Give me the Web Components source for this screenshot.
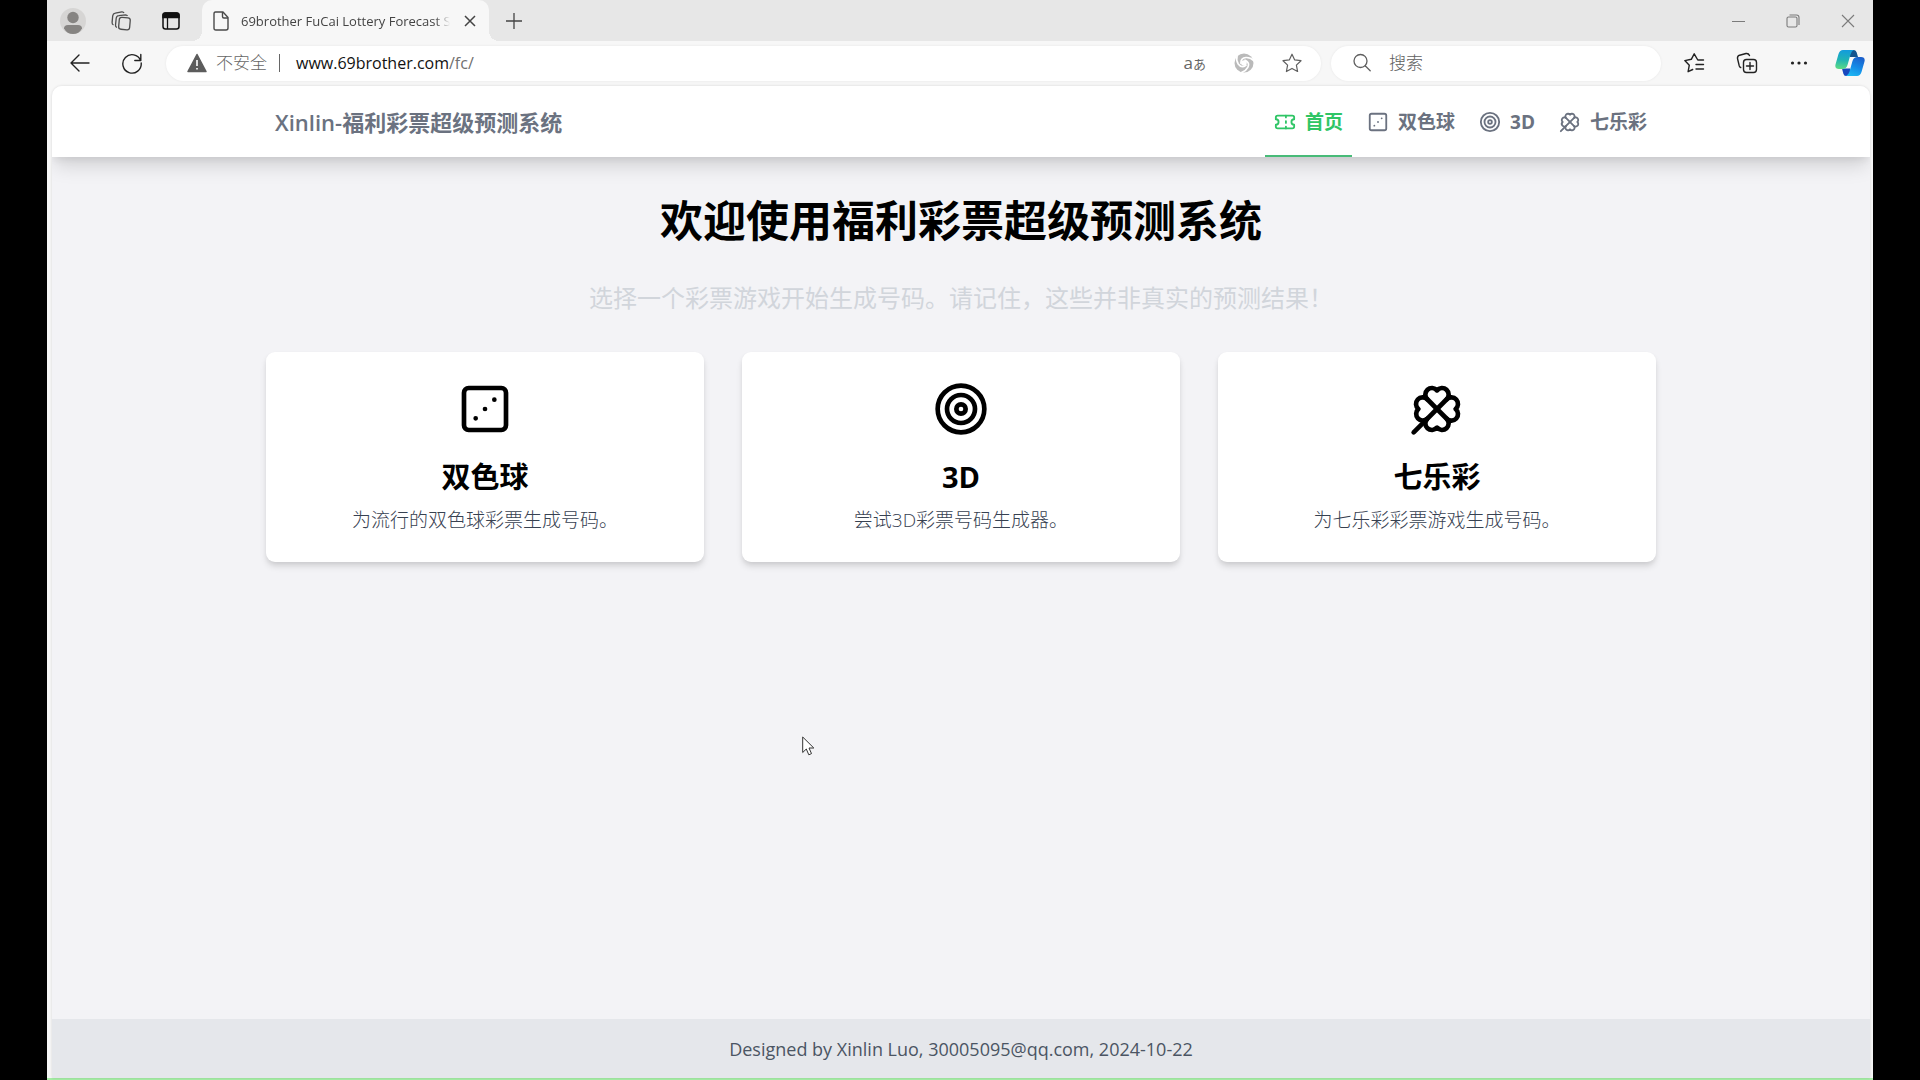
<!DOCTYPE html>
<html lang="zh-CN">
<head>
<meta charset="utf-8">
<title>69brother FuCai Lottery Forecast System</title>
<style>
html,body{margin:0;height:100%;background:#000}
body{font-family:"Open Sans","Noto Sans CJK SC",sans-serif;display:flex;overflow:hidden}
browser-window{margin:0 47px}
</style>
</head>
<body>
<browser-window>
  <lottery-page></lottery-page>
</browser-window>
<mouse-pointer></mouse-pointer>
<script>
const define = (name, html, setup) => customElements.define(name, class extends HTMLElement {
  constructor() {
    super();
    this.attachShadow({mode: 'open'}).innerHTML = '<style>*{box-sizing:border-box}a{color:inherit;text-decoration:none}svg{display:block}</style>' + html;
  }
  connectedCallback() { if (setup) setup(this, this.shadowRoot); }
});

const stroke = (body, w = 2) => `<svg viewBox="0 0 24 24" fill="none" stroke="currentColor" stroke-width="${w}" stroke-linecap="round" stroke-linejoin="round">${body}</svg>`;
const icons = {
  ticket: stroke('<path d="M2 9a3 3 0 0 1 0 6v2a2 2 0 0 0 2 2h16a2 2 0 0 0 2-2v-2a3 3 0 0 1 0-6V7a2 2 0 0 0-2-2H4a2 2 0 0 0-2 2Z"/><path d="M13 5v2M13 17v2M13 11v2"/>'),
  dice: stroke('<rect x="3" y="3" width="18" height="18" rx="2"/><path d="M16 8h.01M12 12h.01M8 16h.01"/>'),
  target: stroke('<circle cx="12" cy="12" r="10"/><circle cx="12" cy="12" r="6"/><circle cx="12" cy="12" r="2"/>'),
  clover: stroke('<path d="M16.17 7.83 2 22"/><path d="M4.02 12a2.827 2.827 0 1 1 3.81-4.17A2.827 2.827 0 1 1 12 4.02a2.827 2.827 0 1 1 4.17 3.81A2.827 2.827 0 1 1 19.98 12a2.827 2.827 0 1 1-3.81 4.17A2.827 2.827 0 1 1 12 19.98a2.827 2.827 0 1 1-4.17-3.81A1 1 0 1 1 4 12"/><path d="m7.83 7.83 8.34 8.34"/>'),
  profile: '<svg viewBox="0 0 26 26"><circle cx="13" cy="13" r="13" fill="#d6d5d4"/><circle cx="13" cy="9.500" r="5.700" fill="#868482"/><path d="M4 20.500q0-3.500 4-3.500h10q4 0 4 3.500-3 5.500-9 5.500t-9-5.500z" fill="#868482"/></svg>',
  workspaces: '<svg viewBox="0 0 22 22" fill="none" stroke="#4d4d4d" stroke-width="1.300" stroke-linejoin="round"><rect x="9" y="7.500" width="11" height="12" rx="2.500" transform="rotate(5 14 13)"/><path d="M7 17.500q-1.600-.5-1.500-2.200l.7-7q.3-2.500 2.700-2.700l6.600-.8q1.500 0 2 1.300"/><path d="M3.500 15q-1.600-.8-1.400-2.600l.6-6.500q.3-2.300 2.600-2.700l6.500-1.300q1.600-.2 2.200 1.200"/></svg>',
  tabs: '<svg viewBox="0 0 18 18" fill="none" stroke="#111" stroke-width="1.500"><rect x="1" y="1" width="16" height="16" rx="2.500"/><path d="M1 3.500q0-2.500 2.500-2.500h11q2.500 0 2.500 2.500V5.500H1z" fill="#111"/><path d="M5.500 5v12" stroke-width="1.300"/></svg>',
  page: '<svg viewBox="0 0 20 20" fill="none" stroke="#4a4a4a" stroke-width="1.400" stroke-linejoin="round"><path d="M4.500 1h7.500l5 5.500V17q0 2-2 2H5q-2 0-2-2V3q0-2 1.500-2z"/><path d="M11.500 1v4.500q0 1.500 1.500 1.500h4"/></svg>',
  close: '<svg viewBox="0 0 20 20" fill="none" stroke="currentColor" stroke-width="1.500"><path d="m5 5 10 10M15 5 5 15"/></svg>',
  plus: '<svg viewBox="0 0 20 20" fill="none" stroke="#444" stroke-width="1.300"><path d="M10 2v16M2 10h16"/></svg>',
  minimize: '<svg viewBox="0 0 20 20" fill="none" stroke="#7b7b7b"><path d="M4 10.500h13"/></svg>',
  restore: '<svg viewBox="0 0 20 20" fill="none" stroke="#7b7b7b" stroke-width="1.100"><rect x="4" y="6" width="10" height="10" rx="1.500"/><path d="M6.500 4h7q2.500 0 2.500 2.500V14"/></svg>',
  quit: '<svg viewBox="0 0 20 20" fill="none" stroke="#7b7b7b" stroke-width="1.100"><path d="m4 4 12 12M16 4 4 16"/></svg>',
  back: '<svg viewBox="0 0 22 22" fill="none" stroke="#222" stroke-width="1.400" stroke-linecap="round" stroke-linejoin="round"><path d="M20 11H2M10 3l-8 8 8 8"/></svg>',
  reload: '<svg viewBox="0 0 22 22" fill="none" stroke="#222" stroke-width="1.400" stroke-linecap="round" stroke-linejoin="round"><path d="M19.600 8.500a9.200 9.200 0 1 0 .6 2.500M19.800 2.500v6h-6"/></svg>',
  warn: '<svg viewBox="0 0 20 20"><path d="M10 1.500 19 18.500H1z" fill="#5c5c5c" stroke="#5c5c5c" stroke-width="1.500" stroke-linejoin="round"/><path d="M10 7v6M10 15v1.600" stroke="#fff" stroke-width="1.600"/></svg>',
  swirl: '<svg viewBox="0 0 20 20"><circle cx="10" cy="10" r="9.500" fill="#bababa"/><g fill="none" stroke="#fff" stroke-width="1.700" stroke-linecap="round"><path d="M7 10.500Q6.500 5 12 4.500q4.500-.2 7.500 3"/><path d="M7 10.500Q6.500 5 12 4.500q4.500-.2 7.500 3" transform="rotate(120 10 10)"/><path d="M7 10.500Q6.500 5 12 4.500q4.500-.2 7.500 3" transform="rotate(240 10 10)"/></g><circle cx="10" cy="10" r="2.800" fill="#fff"/></svg>',
  star: '<svg viewBox="0 0 20 20" fill="none" stroke="#5f5f5f" stroke-width="1.200" stroke-linejoin="round"><path d="m10 1.200 2.700 5.700 6.300.8-4.600 4.400 1.200 6.400L10 15.400l-5.600 3.100 1.200-6.400L1 7.700l6.300-.8z"/></svg>',
  search: '<svg viewBox="0 0 20 20" fill="none" stroke="#5f5f5f" stroke-width="1.300" stroke-linecap="round"><circle cx="8.500" cy="8" r="6.500"/><path d="m13.200 12.800 5 5"/></svg>',
  favorites: '<svg viewBox="0 0 22 22" fill="none" stroke="#222" stroke-width="1.400" stroke-linecap="round" stroke-linejoin="round"><path d="M20.500 8h-5.700L11.200 1.800 8.300 7.300 1.800 8.600l4.500 4.600-1.200 6.500 4.600-2.200M13 12.500h7.500M13 17h7.500"/></svg>',
  collections: '<svg viewBox="0 0 22 22" fill="none" stroke="#222" stroke-width="1.400" stroke-linecap="round" stroke-linejoin="round"><rect x="7.500" y="7.500" width="13" height="13" rx="3"/><path d="M14 10.500v7M10.500 14h7M4.700 15.500q-1-.3-1.500-1.800L1.500 6.500Q1.200 4 3.600 3.200L10 1.500q2.500-.4 3.500 2"/></svg>',
  more: '<svg viewBox="0 0 20 20" fill="#222"><circle cx="3.500" cy="10" r="1.600"/><circle cx="10" cy="10" r="1.600"/><circle cx="16.500" cy="10" r="1.600"/></svg>',
  copilot: '<svg viewBox="0 0 30 28"><defs><linearGradient id="l" x1=".3" y1="0" x2=".2" y2="1"><stop offset="0" stop-color="#139cdc"/><stop offset=".5" stop-color="#20b3b5"/><stop offset="1" stop-color="#5edc83"/></linearGradient><linearGradient id="r" x1=".7" y1="0" x2=".3" y2="1"><stop offset="0" stop-color="#1c60cb"/><stop offset=".5" stop-color="#1489e6"/><stop offset="1" stop-color="#1cb6f2"/></linearGradient></defs><path d="M15 1h4q2 0 2.700 2.500L23 8h-8z" fill="#14558f"/><path d="M15 27h-4q-2 0-2.700-2.500L7 19.500h8z" fill="#1747bd"/><path d="M8 1h11q-2.500.8-3.500 4.500L12.500 16q-1.200 4-5 4H4q-4.500 0-3.500-4.500L3.500 5Q4.800 1 8 1z" fill="url(#l)"/><path d="M22 27H11q2.500-.8 3.500-4.500L17.500 12q1.200-4 5-4H26q4.500 0 3.500 4.500L26.500 23Q25.200 27 22 27z" fill="url(#r)"/></svg>'
};

define('ui-icon', '<style>:host{display:block;flex:none;width:var(--size,20px)}</style><span></span>',
  (el, root) => { root.querySelector('span').innerHTML = icons[el.getAttribute('name')]; });

define('icon-button', `<style>
:host{display:block;flex:none}
button{display:flex;align-items:center;justify-content:center;padding:0;border:0;background:none;color:inherit;font:inherit;width:100%}
</style><button type="button"><ui-icon></ui-icon></button>`,
  (el, root) => {
    root.querySelector('button').setAttribute('aria-label', el.getAttribute('label'));
    root.querySelector('ui-icon').replaceWith(Object.assign(document.createElement('template'), {innerHTML: `<ui-icon name="${el.getAttribute('name')}"></ui-icon>`}).content);
  });

define('tab-strip', `<style>
:host{display:flex;height:41px;background:#e7e7e7;color:#444;align-items:center}
.left{display:flex;align-items:center;gap:24px;padding:0 22px 0 13px}
.tab{align-self:stretch;display:flex;align-items:center;gap:10px;width:287px;padding:0 9px 0 9px;background:#f7f7f7;border-radius:10px 10px 0 0;position:relative}
.tab::before,.tab::after{content:"";position:absolute;bottom:0;width:10px;height:10px}
.tab::before{right:100%;background:radial-gradient(circle at 0 0,transparent 10px,#f7f7f7 10px)}
.tab::after{left:100%;background:radial-gradient(circle at 100% 0,transparent 10px,#f7f7f7 10px)}
.title{flex:1;min-width:0;font:13px/20px "Open Sans","Noto Sans CJK SC",sans-serif;white-space:nowrap;overflow:hidden;-webkit-mask-image:linear-gradient(90deg,#000 93%,transparent)}
.new{margin-left:15px}
.win{display:flex;gap:35px;margin-left:auto;padding-right:15px}
</style>
<div class="left"><icon-button name="profile" label="个人资料" style="--size:26px"></icon-button><icon-button name="workspaces" label="工作区" style="--size:22px"></icon-button><icon-button name="tabs" label="标签页" style="--size:18px;margin-left:6px"></icon-button></div>
<div class="tab"><ui-icon name="page"></ui-icon><span class="title">69brother FuCai Lottery Forecast S</span><icon-button name="close" label="关闭标签页"></icon-button></div>
<icon-button class="new" name="plus" label="新建标签页"></icon-button>
<div class="win"><icon-button name="minimize" label="最小化"></icon-button><icon-button name="restore" label="还原"></icon-button><icon-button name="quit" label="关闭"></icon-button></div>`);

define('address-bar', `<style>
:host{display:flex;align-items:center;height:44px;margin-bottom:1px;padding:0 8px 0 22px;background:#f7f7f7;font-size:17px;line-height:24px;color:#666}
.pill{display:flex;align-items:center;height:35px;background:#fff;border-radius:18px;box-shadow:0 0 3px #0001}
.url{flex:1;margin-left:23px;padding:0 19px 0 21px}
.url label{margin-left:9px;font-weight:300}
.bar{width:1px;height:18px;background:#666;margin:0 16px 0 12px}
.address{flex:1;color:#707070;font-size:16px}
.address b{font-weight:400;color:#111}
.tools{display:flex;align-items:center;gap:28px}
.tr{border:0;padding:0;background:none;color:#666;font:17px/20px "Open Sans","Noto Sans CJK JP",sans-serif}
.tr small{font-size:13px}
.search{width:330px;margin-left:10px;padding:0 21px}
input{flex:1;min-width:0;margin-left:17px;border:0;padding:0;outline:0;background:none;font:300 17px/24px "Open Sans","Noto Sans CJK SC",sans-serif}
input::placeholder{color:#606060;opacity:1}
.right{display:flex;align-items:center;gap:31px;margin-left:22px}
</style>
<icon-button name="back" label="返回" style="--size:22px"></icon-button>
<icon-button name="reload" label="刷新" style="--size:22px;margin-left:30px"></icon-button>
<div class="pill url"><ui-icon name="warn"></ui-icon><label>不安全</label><span class="bar"></span><span class="address"><a href="#"><b>www.69brother.com</b>/fc/</a></span>
<div class="tools"><button class="tr" type="button">a<small>あ</small></button><icon-button name="swirl" label="同步"></icon-button><icon-button name="star" label="收藏"></icon-button></div></div>
<div class="pill search"><ui-icon name="search"></ui-icon><input type="text" aria-label="搜索" placeholder="搜索"></div>
<div class="right"><icon-button name="favorites" label="收藏夹" style="--size:22px"></icon-button><icon-button name="collections" label="集锦" style="--size:22px"></icon-button><icon-button name="more" label="更多"></icon-button><icon-button name="copilot" label="Copilot" style="--size:30px;margin-left:-5px"></icon-button></div>`);

define('browser-window', `<style>
:host{display:flex;flex-direction:column;flex:1;min-width:0;height:100vh;background:#f7f7f7;border-bottom:2px solid #a5eda5;box-sizing:border-box}
main{flex:1;min-height:0;display:flex;margin:0 3px 0 5px;border-radius:10px 10px 0 0;overflow:hidden;box-shadow:0 0 3px #0002}
</style><tab-strip></tab-strip><address-bar></address-bar><main><slot></slot></main>`);

define('nav-link', `<style>
:host{display:flex}
a{display:flex;align-items:center;gap:9px;padding:2px 9px 0;border-bottom:2px solid transparent;color:#6b7280;font-weight:700;font-size:19px;line-height:28px;--size:22px}
:host([active]) a{color:#2fc566;border-color:#48bb78}
</style><a href="#"><slot name="icon"></slot><slot></slot></a>`);

define('site-header', `<style>
:host{display:block;flex:none;background:#fff;box-shadow:0 12px 18px -3px #0002,0 5px 7px -2px #0001;position:relative}
.in{width:1390px;max-width:100%;height:71px;margin:0 auto;display:flex;justify-content:space-between}
.brand{display:flex;align-items:center;padding-left:9px;color:#6b7280;font-size:22px;line-height:28px;font-weight:600}
nav{display:flex;gap:6px}
</style><div class="in"><a class="brand" href="#">Xinlin-福利彩票超级预测系统</a><nav>
<nav-link active><ui-icon slot="icon" name="ticket"></ui-icon>首页</nav-link>
<nav-link><ui-icon slot="icon" name="dice"></ui-icon>双色球</nav-link>
<nav-link><ui-icon slot="icon" name="target"></ui-icon>3D</nav-link>
<nav-link><ui-icon slot="icon" name="clover"></ui-icon>七乐彩</nav-link></nav></div>`);

define('game-card', `<style>
:host{display:block;flex:1;min-width:0;background:#fff;border-radius:9px;box-shadow:0 5px 7px -1px #0002,0 2px 5px -1px #0001}
a{display:flex;flex-direction:column;align-items:center;padding:29px 28px 27px;--size:56px}
h2{margin:21px 0 10px;font-size:29px;line-height:38px;font-weight:700;color:#000}
p{margin:0;font-size:19px;line-height:29px;font-weight:300;color:#374151}
</style><a href="#"><slot name="icon"></slot><h2><slot name="title"></slot></h2><p><slot></slot></p></a>`);

define('lottery-page', `<style>
:host{display:flex;flex-direction:column;flex:1;min-width:0;background:#f3f3f6}
section{flex:1;width:1390px;max-width:100%;margin:0 auto;padding-top:38px;text-align:center}
h1{margin:0;font-size:43px;line-height:52px;font-weight:700;color:#000}
.lead{margin:32px 0 36px;font-size:24px;line-height:37px;color:#d1d5db}
.cards{display:flex;gap:38px}
footer{background:#e5e7eb;height:59px;display:flex;align-items:center;justify-content:center;color:#4b5563;font-size:18px;line-height:28px}
</style><site-header></site-header>
<section><h1>欢迎使用福利彩票超级预测系统</h1><p class="lead">选择一个彩票游戏开始生成号码。请记住，这些并非真实的预测结果！</p>
<div class="cards">
<game-card><ui-icon slot="icon" name="dice"></ui-icon><span slot="title">双色球</span>为流行的双色球彩票生成号码。</game-card>
<game-card><ui-icon slot="icon" name="target"></ui-icon><span slot="title">3D</span>尝试3D彩票号码生成器。</game-card>
<game-card><ui-icon slot="icon" name="clover"></ui-icon><span slot="title">七乐彩</span>为七乐彩彩票游戏生成号码。</game-card>
</div></section>
<footer>Designed by Xinlin Luo, 30005095@qq.com, 2024-10-22</footer>`);

define('mouse-pointer', `<style>:host{position:absolute;left:802px;top:736px;width:13px;pointer-events:none}</style>
<svg viewBox="0 0 13 20"><path d="M.7 1v15.500L4.300 13l2.500 5.800 2.700-1.200L7 12h4.800z" fill="#fff" stroke="#333" stroke-linejoin="round"/></svg>`);
</script>
</body>
</html>
